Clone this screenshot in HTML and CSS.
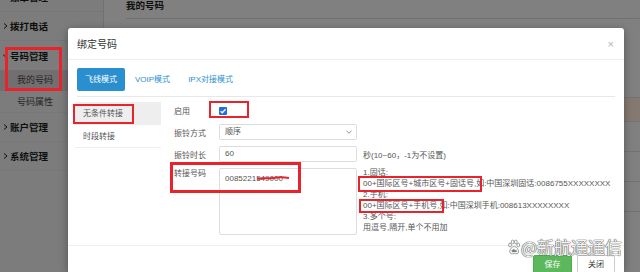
FILE: index.html
```html
<!DOCTYPE html>
<html lang="zh-CN">
<head>
    <meta charset="UTF-8">
    <meta name="viewport" content="width=device-width, initial-scale=1.0">
    <title>绑定号码</title>
    <link rel="stylesheet" href="styles.css">
</head>
<body>
    <div class="page">
        <div class="sidebar">
            <div class="nav">
                <div class="nav-head"><svg viewBox="0 0 5 6"><path d="M1 0.5 L4 3 L1 5.5" fill="none" stroke="#111" stroke-width="1"/></svg>账单管理</div>
                <div class="nav-head"><svg viewBox="0 0 5 6"><path d="M1 0.5 L4 3 L1 5.5" fill="none" stroke="#111" stroke-width="1"/></svg>拨打电话</div>
                <div class="nav-head open"><svg viewBox="0 0 5 6"><path d="M0.3 1.5 L2.5 4 L4.7 1.5" fill="none" stroke="#111" stroke-width="1"/></svg>号码管理</div>
                <div class="nav-sub active">我的号码</div>
                <div class="nav-sub">号码属性</div>
                <div class="nav-head"><svg viewBox="0 0 5 6"><path d="M1 0.5 L4 3 L1 5.5" fill="none" stroke="#111" stroke-width="1"/></svg>账户管理</div>
                <div class="nav-head"><svg viewBox="0 0 5 6"><path d="M1 0.5 L4 3 L1 5.5" fill="none" stroke="#111" stroke-width="1"/></svg>系统管理</div>
            </div>
        </div>

        <div class="main">
            <div class="main-title">我的号码</div>
            <div class="toolbar">
                <div class="tb-box"></div>
                <div class="tb-box tb-second"></div>
                <div class="tb-box tb-third"></div>
                <div class="tb-box tb-fourth"></div>
            </div>
            <div class="list">
                <div class="list-row head"></div>
                <div class="list-row hl"></div>
                <div class="list-row"></div>
                <div class="list-row"></div>
                <div class="list-row"></div>
            </div>
        </div>
    </div>

    <div class="modal">
        <div class="modal-header">
            <span class="modal-title">绑定号码</span>
            <span class="close">×</span>
        </div>

        <div class="tabs">
            <span class="tab active">飞线模式</span>
            <span class="tab">VOIP模式</span>
            <span class="tab">IPX对接模式</span>
        </div>

        <div class="modal-body">
            <div class="side-menu">
                <div class="menu-item active">无条件转接</div>
                <div class="menu-item last">时段转接</div>
            </div>

            <div class="form">
                <div class="row">
                    <span class="row-label">启用</span>
                    <span class="check"><svg viewBox="0 0 8 8"><path d="M1.6 4.2 L3.3 5.8 L6.5 2.2" fill="none" stroke="#fff" stroke-width="1.3"/></svg></span>
                </div>
                <div class="row">
                    <span class="row-label">振铃方式</span>
                    <div class="input select">顺序<svg viewBox="0 0 6 4"><path d="M0.5 0.8 L3 3.2 L5.5 0.8" fill="none" stroke="#888" stroke-width="0.9"/></svg></div>
                </div>
                <div class="row">
                    <span class="row-label">振铃时长</span>
                    <div class="input">60</div>
                    <span class="suffix">秒(10~60，-1为不设置)</span>
                </div>
                <div class="row row-tall">
                    <span class="row-label">转接号码</span>
                    <div class="input textarea">0085221549000
                        <svg class="scribble" viewBox="0 0 32 4"><path d="M0 3 C6 1.5 10 3 16 2 S26 1 32 2" fill="none" stroke="#e8232b" stroke-width="2"/></svg>
                    </div>
                    <div class="help">
                        <div>1.固话:</div>
                        <div>00+国际区号+城市区号+固话号,如:中国深圳固话:0086755XXXXXXXX</div>
                        <div>2.手机:</div>
                        <div>00+国际区号+手机号,如:中国深圳手机:008613XXXXXXXX</div>
                        <div>3.多个号:</div>
                        <div>用逗号,隔开,单个不用加</div>
                    </div>
                </div>
            </div>
        </div>

        <div class="modal-footer">
            <span class="btn btn-save">保存</span>
            <span class="btn">关闭</span>
        </div>
    </div>

    <div class="watermark">
        <svg class="paw" viewBox="0 0 12 16">
            <ellipse cx="2" cy="6" rx="1.4" ry="1.9" fill="#fff" stroke="#777" stroke-width="0.7"/>
            <ellipse cx="4.6" cy="3" rx="1.4" ry="1.9" fill="#fff" stroke="#777" stroke-width="0.7"/>
            <ellipse cx="7.8" cy="3" rx="1.4" ry="1.9" fill="#fff" stroke="#777" stroke-width="0.7"/>
            <ellipse cx="10.3" cy="6" rx="1.4" ry="1.9" fill="#fff" stroke="#777" stroke-width="0.7"/>
            <path d="M6.2 7.5 C3.5 7.5 1.5 11 1.8 13 C2.1 15 4 14.8 6.2 14.6 C8.4 14.8 10.3 15 10.6 13 C10.9 11 8.9 7.5 6.2 7.5 Z" fill="#fff" stroke="#777" stroke-width="0.7"/>
            <text x="6.2" y="13.4" font-size="4" text-anchor="middle" fill="#777" font-family="Liberation Sans, sans-serif">du</text>
        </svg>
        <span>@新航通通信</span>
    </div>

    <div class="mark mark-nav"></div>
    <div class="mark mark-menu"></div>
    <div class="mark mark-check"></div>
    <div class="mark mark-label"></div>
    <div class="mark mark-line1"></div>
    <div class="mark mark-line2"></div>
</body>
</html>
```

FILE: styles.css
```css
* {
    margin: 0;
    padding: 0;
    box-sizing: border-box;
}

html {
    overflow: hidden;
}

/* the page behind the dialog is drawn already dimmed */
body {
    width: 640px;
    height: 272px;
    overflow: hidden;
    position: relative;
    background: #808080;
    font-family: "Liberation Sans", "Noto Sans CJK SC", sans-serif;
    font-size: 8px;
    color: #555;
}

.page {
    display: flex;
    height: 272px;
    overflow: hidden;
}

.sidebar {
    width: 104px;
    background: #7c7c7c;
    border-right: 1px solid #717171;
}

.nav {
    margin-top: -17px;
}

.nav-head {
    display: flex;
    align-items: center;
    height: 29px;
    padding-left: 3px;
    font-size: 9.5px;
    font-weight: bold;
    color: #0e0e0e;
    border-bottom: 1px solid #777;
}

.nav-head.open {
    border-bottom: none;
}

.nav-head svg {
    width: 5px;
    height: 6px;
    margin-right: 2px;
}

.nav-sub {
    height: 21px;
    line-height: 21px;
    padding-left: 17px;
    font-size: 9px;
    color: #262626;
}

.nav-sub.active {
    background: #716f6f;
}

.nav-sub + .nav-sub {
    height: 22px;
    line-height: 22px;
    border-bottom: 1px solid #777;
}

.main {
    flex: 1;
    padding-left: 22px;
    background: #808080;
}

.main-title {
    height: 19px;
    line-height: 12px;
    font-size: 9.5px;
    font-weight: bold;
    color: #0e0e0e;
    border-bottom: 1px solid #717171;
}

.toolbar {
    display: flex;
    margin-top: 9px;
    padding-left: 33px;
}

.tb-box {
    width: 84px;
    height: 16px;
    border: 1px solid #6e6e6e;
    border-radius: 2px;
    background: #808080;
}

.tb-second {
    margin-left: 20px;
}

.tb-third {
    margin-left: 51px;
}

.tb-fourth {
    margin-left: 36px;
}

.list {
    margin-top: 30px;
}

.list-row {
    height: 30px;
    border-bottom: 1px solid #737373;
}

.list-row.head {
    height: 24px;
}

.list-row.hl {
    height: 24px;
    background: #857a72;
}

/* modal */
.modal {
    position: absolute;
    left: 68px;
    top: 28px;
    z-index: 20;
    width: 556px;
    height: 244px;
    overflow: hidden;
    background: #fff;
    border-radius: 3px 3px 0 0;
    box-shadow: 0 2px 8px rgba(0, 0, 0, 0.35);
}

.modal-header {
    display: flex;
    align-items: center;
    justify-content: space-between;
    height: 32px;
    padding: 0 10px 0 9px;
    border-bottom: 1px solid #eee;
}

.modal-title {
    font-size: 10px;
    color: #333;
}

.close {
    font-size: 11px;
    color: #b5b5b5;
}

.tabs {
    display: flex;
    gap: 2px;
    margin: 8px 9px 0;
    padding-bottom: 5px;
    border-bottom: 1px solid #e8e8e8;
}

.tab {
    height: 23px;
    line-height: 23px;
    padding: 0 8px;
    border-radius: 2px;
    color: #2a8fcf;
}

.tab.active {
    background: #2a8fcf;
    color: #fff;
}

.modal-body {
    display: flex;
    height: 149px;
    padding: 5px 9px 0 7px;
    border-bottom: 1px solid #eee;
}

.side-menu {
    width: 86px;
}

.menu-item {
    height: 23px;
    line-height: 23px;
    padding-left: 8px;
    color: #555;
}

.menu-item.active {
    background: #eee;
}

.menu-item.last {
    border-bottom: 1px solid #eee;
}

.form {
    flex: 1;
    padding-left: 13px;
}

.row {
    display: flex;
    align-items: center;
    height: 16px;
    margin-bottom: 6px;
}

.row-label {
    width: 45px;
    color: #555;
}

.check {
    display: flex;
    width: 8px;
    height: 8px;
    margin-top: 2px;
    background: #1f6fe0;
    border-radius: 1px;
}

.check svg {
    width: 8px;
    height: 8px;
}

.input {
    position: relative;
    width: 138px;
    height: 16px;
    line-height: 14px;
    padding-left: 5px;
    border: 1px solid #ddd;
    border-radius: 2px;
    color: #555;
}

.select {
    display: flex;
    align-items: center;
    justify-content: space-between;
    padding-right: 4px;
}

.select svg {
    width: 6px;
    height: 4px;
}

.suffix {
    margin-left: 6px;
}

.row-tall {
    height: auto;
    align-items: flex-start;
}

.row-tall .row-label {
    line-height: 11px;
}

.textarea {
    height: 67px;
    padding: 4px 5px;
    line-height: 11px;
}

.scribble {
    position: absolute;
    left: 37px;
    top: 7px;
    width: 32px;
    height: 4px;
}

.help {
    margin: -1.5px 0 0 6px;
    line-height: 11px;
    white-space: nowrap;
    color: #555;
}

.modal-footer {
    display: flex;
    justify-content: flex-end;
    gap: 5px;
    padding: 9px 9px 0;
}

.btn {
    width: 38px;
    height: 19px;
    line-height: 17px;
    text-align: center;
    border: 1px solid #ccc;
    border-radius: 2px;
    color: #333;
    background: #fff;
}

.btn-save {
    width: 39px;
    background: #5cb85c;
    border-color: #4cae4c;
    color: #fff;
}

/* watermark */
.watermark {
    position: absolute;
    left: 508px;
    top: 237px;
    z-index: 30;
    display: flex;
    align-items: center;
    gap: 1px;
    font-family: "Noto Sans CJK SC", sans-serif;
    font-size: 17px;
    line-height: 20px;
    color: rgba(255, 255, 255, 0.95);
    text-shadow: 0 0 1px #555, 0 0 1px #555, 0 0 1px #777;
}

.paw {
    width: 12px;
    height: 16px;
}

/* red annotation boxes */
.mark {
    position: absolute;
    z-index: 40;
    border: 2px solid #e8232b;
}

.mark-nav {
    left: 5px;
    top: 47px;
    width: 57px;
    height: 44px;
    border-width: 3px;
}

.mark-menu {
    left: 73px;
    top: 104px;
    width: 61px;
    height: 20px;
}

.mark-check {
    left: 209px;
    top: 101px;
    width: 40px;
    height: 17px;
    border-width: 2.5px;
}

.mark-label {
    left: 170px;
    top: 162px;
    width: 131px;
    height: 31px;
    border-width: 3px;
}

.mark-line1 {
    left: 358px;
    top: 176px;
    width: 124px;
    height: 16px;
    border-width: 2.5px;
}

.mark-line2 {
    left: 359px;
    top: 199px;
    width: 85px;
    height: 14px;
    border-width: 2.5px;
}
```
